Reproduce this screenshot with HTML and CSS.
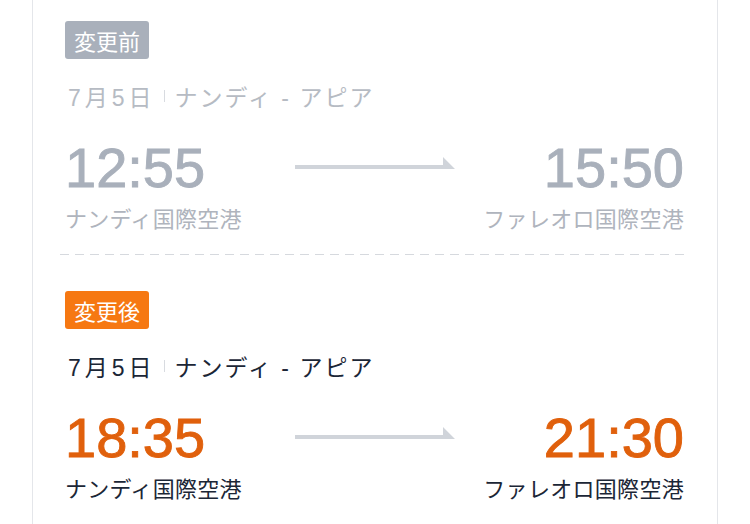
FILE: index.html
```html
<!DOCTYPE html>
<html>
	<head>
		<meta charset="utf-8">
		<title>フライト変更</title>
		<link rel="stylesheet" href="styles.css">
	</head>
	<body>
		<div class="card">
			<div class="segment before">
				<span class="tag">変更前</span>
				<div class="route">
					<span class="date">7月5日</span>
					<i class="sep"></i>
					<span class="cities">ナンディ - アピア</span>
				</div>
				<div class="times">
					<div class="point">
						<div class="clock">12:55</div>
						<div class="airport">ナンディ国際空港</div>
					</div>
					<svg class="arrow" width="160" height="12" viewBox="0 0 160 12">
						<polygon points="0,8 148,8 148,0 160,12 0,12" fill="#d0d4da"/>
					</svg>
					<div class="point right">
						<div class="clock">15:50</div>
						<div class="airport">ファレオロ国際空港</div>
					</div>
				</div>
			</div>
			<div class="dash"></div>
			<div class="segment after">
				<span class="tag">変更後</span>
				<div class="route">
					<span class="date">7月5日</span>
					<i class="sep"></i>
					<span class="cities">ナンディ - アピア</span>
				</div>
				<div class="times">
					<div class="point">
						<div class="clock">18:35</div>
						<div class="airport">ナンディ国際空港</div>
					</div>
					<svg class="arrow" width="160" height="12" viewBox="0 0 160 12">
						<polygon points="0,8 148,8 148,0 160,12 0,12" fill="#d0d4da"/>
					</svg>
					<div class="point right">
						<div class="clock">21:30</div>
						<div class="airport">ファレオロ国際空港</div>
					</div>
				</div>
			</div>
		</div>
	</body>
</html>
```

FILE: styles.css
```css
*{
	margin: 0;
	padding: 0;
}
body{
	background-color: #fff;
	font-family: "Liberation Sans", "Noto Sans CJK JP", sans-serif;
}
.card{
	margin: 0 32px;
	height: 524px;
	border-left: 1px solid #e4e6ea;
	border-right: 1px solid #e4e6ea;
	padding: 21px 33px 0 32px;
	box-sizing: border-box;
}
.tag{
	display: inline-block;
	height: 38px;
	line-height: 38px;
	padding: 0 9px;
	font-size: 22px;
	color: #fff;
	border-radius: 3px;
	font-family: "Noto Sans CJK JP", sans-serif;
}
.route{
	display: flex;
	align-items: center;
	height: 30px;
	margin-top: 22px;
	padding-left: 3px;
	font-size: 23px;
	letter-spacing: 2px;
}
.date{
	letter-spacing: 4px;
}
.sep{
	width: 1px;
	height: 12px;
	margin: 0 10px 0 8px;
	background-color: #d8dbe0;
}
.times{
	display: grid;
	grid-template-columns: 1fr auto 1fr;
	margin-top: 27px;
}
.arrow{
	margin-top: 19px;
}
.right{
	text-align: right;
}
.clock{
	font-size: 56px;
	line-height: 60px;
	-webkit-text-stroke: 0.9px currentColor;
}
.airport{
	margin-top: 4px;
	height: 30px;
	line-height: 30px;
	font-size: 22px;
	letter-spacing: 0.3px;
	font-family: "Noto Sans CJK JP", sans-serif;
}
.dash{
	height: 1px;
	margin: 22px -5px 0 -5px;
	background: repeating-linear-gradient(to right, #d6d9de 0, #d6d9de 9px, transparent 9px, transparent 15px);
}
.after{
	padding-top: 36px;
}
.before .tag{
	background-color: #a9b0bb;
}
.before .route{
	color: #b6bbc3;
}
.before .clock{
	color: #a9b0bb;
}
.before .airport{
	color: #afb4bd;
}
.after .tag{
	background-color: #f67812;
}
.after .route{
	color: #1b2636;
}
.after .clock{
	color: #e0600c;
}
.after .airport{
	color: #1b2636;
}
```
